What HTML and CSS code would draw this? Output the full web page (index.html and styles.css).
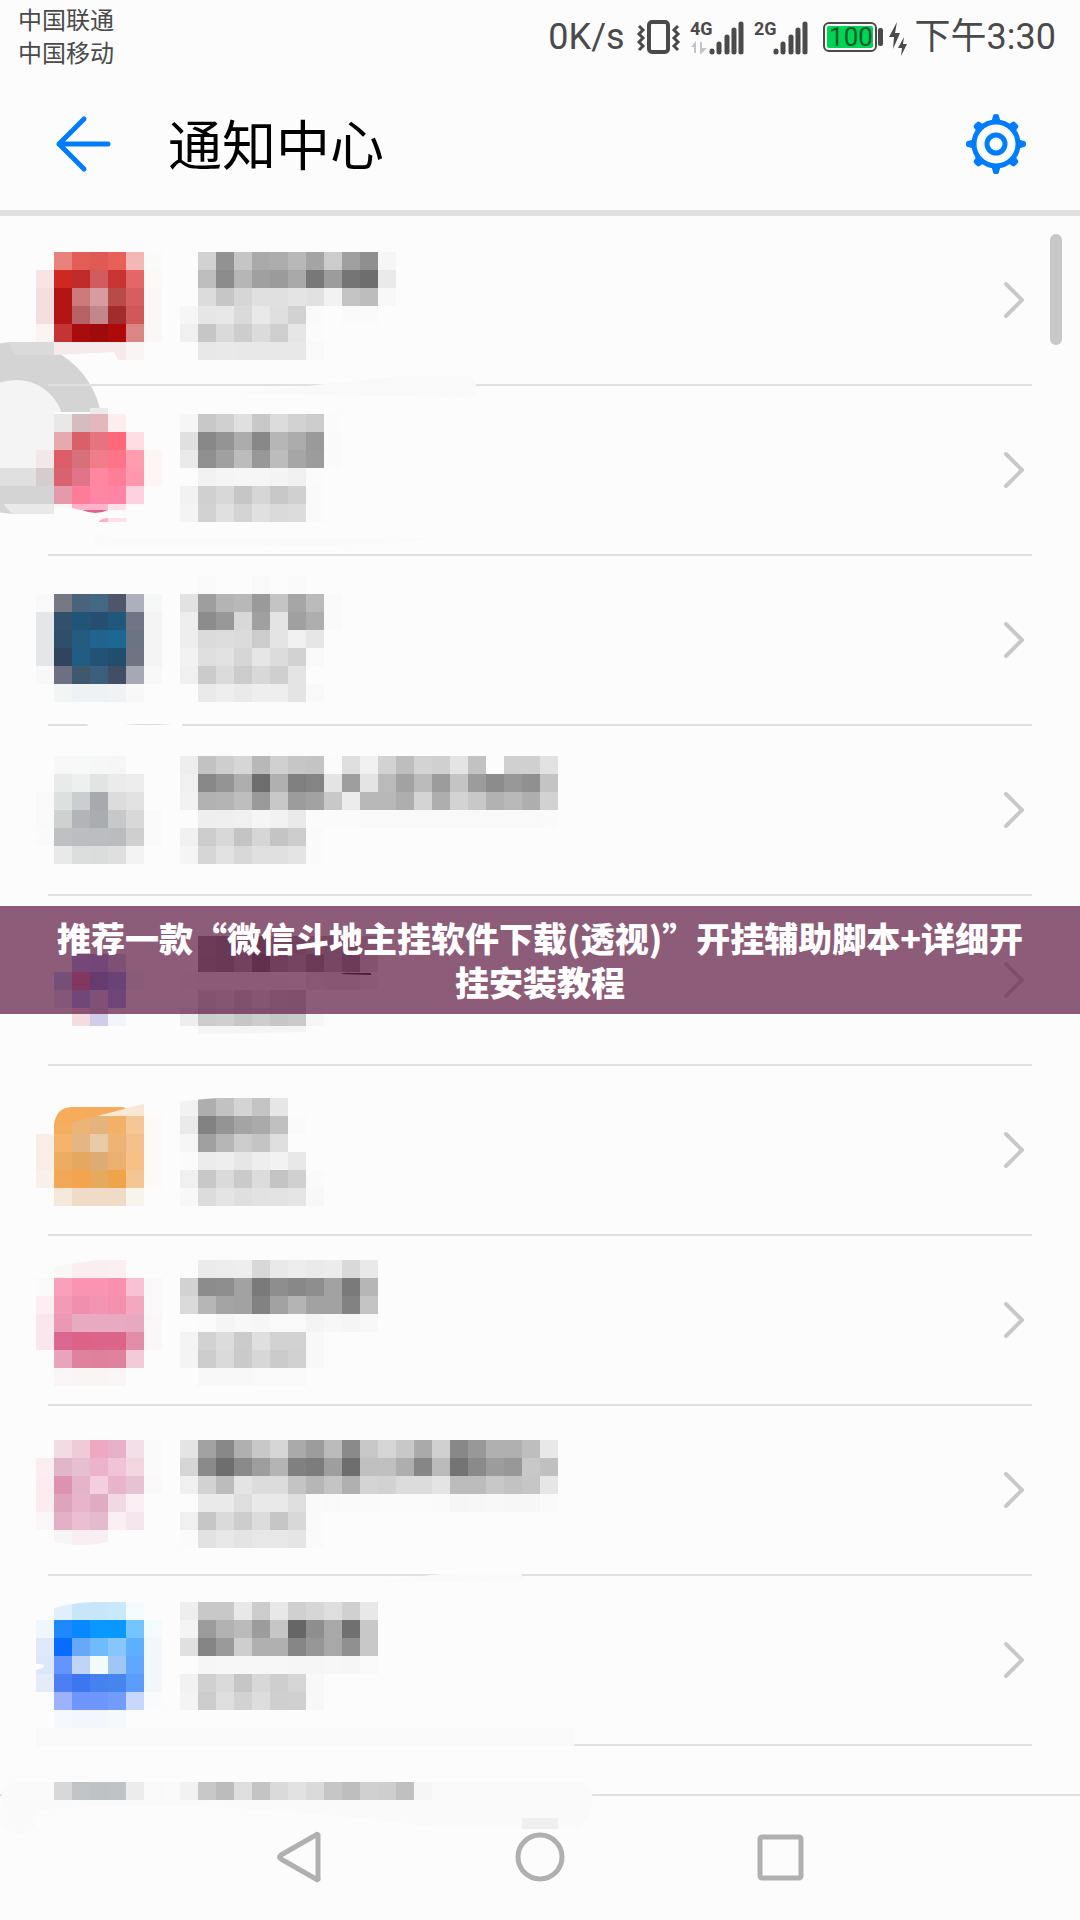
FILE: index.html
```
<!DOCTYPE html>
<html lang="zh-CN">
<head>
    <meta charset="UTF-8">
    <meta name="viewport" content="width=device-width, initial-scale=1.0">
    <title>通知中心</title>
    <link rel="stylesheet" href="styles.css">
</head>
<body>
    <div class="status-bar">
        <div class="carriers">
            <p>中国联通</p>
            <p>中国移动</p>
        </div>
        <div class="status-info">
            <span class="speed">0K/s</span>
            <svg class="vibrate" width="44" height="36" viewBox="0 0 44 36" fill="none" stroke="#4a4a4a">
                <rect x="12" y="3" width="19" height="30" rx="3" stroke-width="4"/>
                <path d="M2 7l4 4-4 4 4 4-4 4 4 4-4 4M41 7l-4 4 4 4-4 4 4 4-4 4 4 4" stroke-width="3"/>
            </svg>
            <svg class="signal" width="54" height="36" viewBox="0 0 54 36">
                <text x="-1" y="16">4G</text>
                <path d="M0 28l5-6v12H3v-6zM9 23h2v6h5l-6 6H9z" fill="#c4c4c4"/>
                <path d="M21 32v1M28 25v8M36 18v15M43 11v22M50 5v28" stroke="#4a4a4a" stroke-width="5" stroke-linecap="round"/>
            </svg>
            <svg class="signal" width="54" height="36" viewBox="0 0 54 36">
                <text x="-1" y="16">2G</text>
                <path d="M21 32v1M28 25v8M36 18v15M43 11v22M50 5v28" stroke="#4a4a4a" stroke-width="5" stroke-linecap="round"/>
            </svg>
            <svg class="battery" width="84" height="36" viewBox="0 0 84 36">
                <rect x="1" y="4" width="52" height="28" rx="5" fill="none" stroke="#4a4a4a" stroke-width="2"/>
                <rect x="4" y="7" width="46" height="22" rx="2" fill="#00d455"/>
                <rect x="55" y="9" width="5" height="18" rx="2" fill="#4a4a4a"/>
                <text x="28" y="27" text-anchor="middle">100</text>
                <path d="M74 3L66 18h5l-1 12 7-16h-5zM81 18l-6 11h4l-1 8 6-12h-4z" fill="#4a4a4a"/>
            </svg>
            <span class="clock">下午3:30</span>
        </div>
    </div>

    <header class="title-bar">
        <button class="icon-button" type="button" aria-label="返回">
            <svg width="60" height="60" viewBox="0 0 60 60" fill="none" stroke="#007dff" stroke-width="5" stroke-linecap="round" stroke-linejoin="round">
                <path d="M30 5L5 30l25 25M5 30h49"/>
            </svg>
        </button>
        <h1>通知中心</h1>
        <button class="icon-button" type="button" aria-label="设置">
            <svg width="60" height="60" viewBox="0 0 60 60" fill="none" stroke="#007dff">
                <circle cx="30" cy="30" r="22" stroke-width="5"/>
                <circle cx="30" cy="30" r="9" stroke-width="5"/>
                <g fill="#007dff" stroke="none">
                    <path d="M25 9l2-7q0-2 3-2t3 2l2 7z"/>
                    <path d="M25 9l2-7q0-2 3-2t3 2l2 7z" transform="rotate(90 30 30)"/>
                    <path d="M25 9l2-7q0-2 3-2t3 2l2 7z" transform="rotate(180 30 30)"/>
                    <path d="M25 9l2-7q0-2 3-2t3 2l2 7z" transform="rotate(270 30 30)"/>
                    <path d="M25 9l1-6q0-2 4-2t4 2l1 6z" transform="rotate(45 30 30)"/>
                    <path d="M25 9l1-6q0-2 4-2t4 2l1 6z" transform="rotate(135 30 30)"/>
                    <path d="M25 9l1-6q0-2 4-2t4 2l1 6z" transform="rotate(225 30 30)"/>
                    <path d="M25 9l1-6q0-2 4-2t4 2l1 6z" transform="rotate(315 30 30)"/>
                </g>
            </svg>
        </button>
    </header>

    <main>
        <button class="float-ball" type="button" aria-label="悬浮球">
            <svg width="172" height="172" viewBox="-70 342 172 172">
                <circle cx="16" cy="428" r="67" fill="#f4f4f4" stroke="#d4d4d4" stroke-width="38"/>
                <path d="M54 412h48v102H54z" fill="#fcfcfc"/>
                <path d="M0 468h54v18H0z" fill="#e0e0e0"/>
                <path d="M0 486h54v18H0z" fill="#d4d4d4"/>
                <path d="M4 504h50v10H14q-6-2-10-10z" fill="#e9e9e9"/>
            </svg>
        </button>
        <ul class="app-list" id="app-list"></ul>
        <div class="scrollbar"></div>
        <div class="banner">推荐一款“微信斗地主挂软件下载(透视)”开挂辅助脚本+详细开挂安装教程</div>
    </main>

    <nav class="nav-bar">
        <button type="button" aria-label="后退">
            <svg width="50" height="50" viewBox="0 0 50 50"><path d="M43 3v42a1 1 0 0 1-2 1L6 26q-3-2 0-4L41 2a1 1 0 0 1 2 1z"/></svg>
        </button>
        <button type="button" aria-label="主页">
            <svg width="50" height="50" viewBox="0 0 50 50"><circle cx="25" cy="24" r="22"/></svg>
        </button>
        <button type="button" aria-label="最近任务">
            <svg width="50" height="50" viewBox="0 0 50 50"><rect x="5" y="4" width="41" height="41" rx="2"/></svg>
        </button>
    </nav>

    <script src="script.js"></script>
</body>
</html>
```

FILE: styles.css
```
* {
    margin: 0;
    padding: 0;
    box-sizing: border-box;
}

body {
    display: flex;
    flex-direction: column;
    min-height: 100vh;
    font-family: Roboto, 'Noto Sans CJK SC', sans-serif;
    color: #4a4a4a;
    background-color: #fcfcfc;
    overflow-x: hidden;
}

button {
    border: none;
    background: none;
    cursor: pointer;
}

svg {
    display: block;
    overflow: visible;
}

/* 状态栏 */
.status-bar {
    display: flex;
    justify-content: space-between;
    height: 72px;
    padding: 4px 24px 0 18px;
}

.carriers {
    padding-top: 1px;
    font-size: 24px;
    line-height: 33px;
}

.status-info {
    display: flex;
    align-items: center;
    height: 66px;
    font-size: 36px;
    line-height: 48px;
}

.vibrate {
    margin-left: 12px;
}

.signal {
    margin-left: 10px;
}

.signal text {
    font-size: 18px;
    font-weight: bold;
    fill: #4a4a4a;
}

.battery {
    margin-left: 14px;
}

.battery text {
    font-size: 26px;
    fill: #17592f;
}

.clock {
    margin-left: 8px;
}

/* 标题栏 */
.title-bar {
    display: flex;
    align-items: center;
    height: 144px;
    padding: 6px 54px 0;
    border-bottom: 6px solid #e0e0e0;
}

.icon-button {
    width: 60px;
    height: 60px;
}

.title-bar h1 {
    flex: 1;
    padding: 8px 0 0 54px;
    font-size: 54px;
    font-weight: normal;
    line-height: 72px;
    color: #000;
}

/* 列表 */
main {
    position: relative;
    z-index: 1;
    flex: 1;
}

.float-ball {
    position: absolute;
    z-index: -1;
    top: 126px;
    left: -70px;
}

.app-list {
    padding: 0 48px;
    list-style: none;
}

.app-list a {
    display: flex;
    align-items: center;
    gap: 18px;
    padding-right: 7px;
    border-bottom: 2px solid #e0e0e0;
}

.app-list li:last-child a {
    border-bottom: none;
}

.chevron {
    margin-left: auto;
}

.scrollbar {
    position: absolute;
    top: 18px;
    right: 18px;
    width: 12px;
    height: 111px;
    border-radius: 6px;
    background-color: #c8c8c8;
}

.banner {
    position: absolute;
    top: 690px;
    left: 0;
    right: 0;
    padding: 10px 48px;
    font-family: 'Noto Sans CJK SC', sans-serif;
    font-size: 34px;
    font-weight: 900;
    line-height: 44px;
    text-align: center;
    color: #fff;
    background-color: rgba(99, 30, 71, 0.72);
}

/* 导航栏 */
.nav-bar {
    display: flex;
    justify-content: center;
    align-items: center;
    gap: 190px;
    height: 126px;
    border-top: 2px solid #e0e0e0;
}

.nav-bar svg {
    fill: none;
    stroke: #b0b0b0;
    stroke-width: 5;
}
```

FILE: script.js
```
// 每个色块 18px，"." 表示空白；两位数字为灰度
const CELL = 18;

const apps = [
    {
        top: 36,
        smudge: '<path d="M240 178Q340 166 400 160H470q6 4 6 10 0 11-10 11Z" fill="#f9f9f9"/>',
        icon: [
            '. e8827c e15d55 e05a54 e8605a f4b8b4 fafaf8',
            'f8e4e4 cf2820 c12a2a d05c60 c83432 e56666 fcf8f6',
            'f5dede b31414 cc7a7a d89c9e b84a48 d65e5e fbf7f6',
            'f5dede b31414 b66264 c4868a a02c2c d05858 fbf7f6',
            'faf4f2 c43434 a80c0c 9f0a0a af0a0a da8684 fbf7f6',
            '. . . . . faf4f4 .'
        ],
        iconExtra: '<path d="M9 126h45v13H16q-5-4-7-13z" fill="#dadada"/><path d="M54 126h72v18h-8l-4-8-60 3z" fill="#f6eaea"/>',
        text: [
            '. d2 92 c5 aa ad b8 a4 cc a0 8f f6',
            '. be 8c b6 a0 9b a8 78 9c 75 6e ea',
            '. dc c6 d6 e0 e0 e4 e1 f2 c4 bd f8',
            'f6 e6 e8 da e9 df d2 fa . fa fa',
            'f0 c6 da cd db cf e6 fb',
            '. e8 e9 e8 e8 e8 e8 f9'
        ]
    },
    {
        top: 28,
        smudge: '<path d="M94 150Q96 140 110 152H430Q400 162 100 162Q94 158 94 150Z" fill="#fafafa"/>',
        icon: [
            '. e8e8e8 d4bcbe e2b8bc fceeee . .',
            '. e6aaae d95f68 e5747e ff6878 ffdce2 .',
            'f2e8ea dc5c68 d8707a f07e8a ff7488 ff9cae fdf6f5',
            'd4cccd d96270 e2748a ff88a0 ff7e98 ff98ae fdf6f5',
            'd4d4d4 e29aaa fe7c98 ff86a4 ff84a6 ffd0e0 .'
        ],
        iconExtra: '<path d="M90 22h18v6H90z" fill="#ebebeb"/><path d="M54 118h18v4H54z" fill="#faf6f6"/><path d="M72 118h36v6H80l-8-2z" fill="#fdb4cb"/><path d="M108 118h18v6h-18z" fill="#fde0e8"/><path d="M82 124h26q-12 6-26 0z" fill="#e0608a"/><path d="M98 136q4-4 10-4v4z" fill="#ffb0c8"/><path d="M108 132h18v4h-18z" fill="#fde0e8"/>',
        text: [
            'f6 c8 d0 e0 c8 dc d2 cc fb',
            'e0 88 94 ac 88 b6 ac 9a fa',
            'ea 90 a0 bc 98 bc a6 9c fa',
            '. f2 f5 f6 f6 f4 f0 fb',
            'f2 d0 d8 c6 d6 c8 d0 fa',
            'f4 d2 e0 d4 e0 da dc fa'
        ]
    },
    {
        top: 20,
        smudge: '<path d="M84 160Q130 174 182 167V170H88z" fill="#fcfcfc"/>',
        icon: [
            '',
            'f9f9fa 767884 4a627a 426884 50566a acb0bc f6f8f8',
            'e4e6e8 30506c 225478 264e70 20587c 707484 f4f4f4',
            'e4e6e8 2e4e6a 245a80 20648e 1c6892 6c7484 f4f4f4',
            'e4e6e8 304460 205c84 225274 224e6e 707482 f4f4f4',
            'f8f8f9 6c7080 40586e 3a5e7c 424e64 a6a8b4 f8f8f8',
            '. f3f4f4 eff2f4 eff2f4 f0f2f4 f8f8f9 .'
        ],
        text: [
            '. f9 . . f9 . f9',
            'e2 9e b4 b8 9a c4 a6 ba fa',
            'ee 8c 98 d8 a0 e4 a0 ae fa',
            'ee db dd db cc e4 f0 e6',
            'f2 de e2 d6 e6 dc d2 f9',
            'f0 cb db cc d8 cf e4',
            '. ea ee ea ee ee e4 f9'
        ]
    },
    {
        top: 30,
        icon: [
            '. f8f8f8 f7f8f8 f7f7f7 f6f6f6 . .',
            '. e9eaea ecf0ef e1e4e3 ecebec ededed .',
            'f9f9f9 dce0de cccdcf a8a9ac dcdcdd e2e2e2 .',
            'f9f9f9 cfd1d1 b2b4b7 aaadb0 c6c8ca d8d8d8 fafafa',
            'fafafa bec0c2 bbbdc0 bbbdc0 babcbe cfcfcf fafafa',
            '. e9e9e9 dbdedd dadddb dedfde f3f3f3 .'
        ],
        text: [
            'ee c2 ce d6 b8 d0 c6 c4 fb de f1 d2 be d3 d0 e4 c2 . d0 d0 e2',
            'f0 88 94 ae 6e b0 80 84 e4 9e e4 ba a2 ba 9c c4 9c 8c 98 90 c4',
            'f2 b2 b4 be 9a c8 9c a2 c8 ec b8 b8 ae d4 ae d3 c8 b2 b9 ae d2',
            '. ee ef f0 f5 f2 ea fb fb fb f9 f9 f9 f9 f9 f9 f9 f9 f9 f9 fa',
            'f1 cc d8 c4 d6 c4 cc fa',
            'f5 d6 e2 d8 e0 e0 e4 fa'
        ]
    },
    {
        top: 40,
        icon: [
            '',
            '. . a0b0f8 a0acf4 c8d0e6 . .',
            '. a8c8fe d878a0 7088dc 7ca0f8 f4f4f8 .',
            '. e0e4f8 90b0f8 ccd0ec 90a8f8 . .',
            '. . f4dcdf d0cdea f2f5fb . .'
        ],
        text: [
            '. 84 7c 9a 74 b0 9c b4 ac a4 d0',
            'fa 80 7c 9a 5e 94 a4 80 ac 84 d8',
            'f6 f4 f4 f4 f4 f4 f8 e8 e4 e4 f0',
            '. d8 e0 d0 e0 d0 cc',
            'ee cc cf c6 cd c6 ca f6'
        ],
        textExtra: '<path d="M340 78q8-2 11-1h20v2z" fill="#181018"/><path d="M198 130h108v6l-108 2z" fill="#f5f5f5"/>'
    },
    {
        top: 32,
        icon: [
            '. . . . . . .',
            '. f4ae62 ecb476 e4b47c f2b068 f6c694 fcf9f6',
            'f8eee6 f5b46a e4b684 e8cca8 eeb476 f6c08a fcf9f6',
            'f8eee6 eeac62 e6a860 dcac74 eab070 f6c086 fcf9f6',
            'faf0ea f2a858 f4a44e e6aa5e eea448 f4c694 fcf9f6',
            '. f4eadc f0dcc6 f0dcc6 f0dcc6 f8f4ec .'
        ],
        iconExtra: '<path d="M96 50l30-8 18-4v12z" fill="#fae8d6"/><path d="M54 60V58Q56 41 72 41H122q6 1 2 2L90 52z" fill="#f6ac5a"/><path d="M54 40V59Q56 41 72 41V40z" fill="#fcfcfc"/>',
        text: [
            'f2 ae c2 d4 c4 e6',
            'ea 82 94 a4 aa c0 fa',
            'f6 a0 b6 cc c4 de',
            'fb ec ee e6 ee f2 e8',
            'f0 c8 da ca dc c4 d0 fa',
            'f8 dc e4 df e2 e3 e5 f8'
        ],
        textExtra: '<path d="M180 32h38q-20 1-38 4z" fill="#fcfcfc"/>'
    },
    {
        top: 24,
        icon: [
            '. fcf6f7 fbeef1 fbeef1 fbeff2 . .',
            'fafafa f8a0bc fa94b2 fa94b2 fa90b0 f8c2d4 fbf8fa',
            'fceef2 f29ab6 f090ae f294b2 f290ae f4a8c0 fbf8fa',
            'f8e8ee ea98b4 e8aac0 e8aac0 e8aac0 e8a8c0 fbf6f8',
            'f8e8ee da6890 dc6288 dc648a dc648a e28ea8 fbf6f8',
            '. e8a4bc de82a0 de829c de829e f2cad8 .',
            '. faf5f6 faf4f5 faf4f5 faf5f6'
        ],
        iconExtra: '<path d="M54 24h44q-22 2-44 7z" fill="#fcfcfc"/>',
        text: [
            '. eb ed ee d8 e9 ed ea ec d9 e9',
            'd2 8c 8e a2 7a 8e 88 8e a2 7a b6',
            'da b6 a4 a2 82 a2 b4 a2 a2 82 c4',
            '. fb f5 f8 f6 f9 f9 f4 f7 f5 f8',
            'f4 d2 dc cb df d2 d2 f8',
            'f4 cc da ca d7 cb d1 f8',
            '. f8 f8 f8 f9 f9 f9'
        ]
    },
    {
        top: 34,
        smudge: '<path d="M380 176Q430 168 460 167H520q4 3 4 8Z" fill="#fafafa"/>',
        icon: [
            '. f1dce4 efcbd8 f0a8c2 e6b0c8 f2dfe7 fafafa',
            'faeef1 e0b6c8 e6c0d0 ecb4cc f0c4d6 f4d6e1 fafafa',
            'fbecf1 dc92b0 e6b4c8 f4cedc e8b4cc e6c2d2 fbf8f9',
            'fbecf0 dea4bc e8b4cc e0acc2 f2d8e2 faf0f3 .',
            'fbf7f8 e4b0c6 ecbed2 e4bace faf0f3 f4e6ec .',
            '. f9f4f5 f9eef1 f9eef1 . . .'
        ],
        iconExtra: '<path d="M54 142V136q30 6 54 0v6z" fill="#fcfcfc"/>',
        text: [
            'e4 a2 88 b0 c8 d6 aa 9c ba 8a c8 d6 c8 aa d0 88 98 b0 b0 be e8',
            'd6 8a 6e 8a 9e b4 80 7c 9e 6e c0 c0 ae 86 ba 74 8a 9c 98 c8 c0',
            'f0 d2 bc e4 dc dc c4 b6 c4 b0 d4 d2 dc dc e4 bc bc c8 c2 c6 e6',
            '. ea ea de e9 e9 de fa f9 fa fa fb fb fb fa f6 f7 f8 f7 f7 fa',
            'f0 c6 da cd dc c6 d8 fa',
            'fb e2 e8 e4 e7 e7 e5 fa'
        ]
    },
    {
        top: 26,
        smudge: '<path d="M36 152H574q2 8 0 18H36z" fill="#f9f9f9"/>',
        icon: [
            '. e0f0fb c8e6fa c8e6fa c8e8fb f4fbfd .',
            'f0f6fd 2088fc 0888fe 0898ff 0898ff 74c4ff f4fbfd',
            'e0e9fa 086cfe 68a8f8 70bafe 88c6fe 5cb0fe f2f7fc',
            'dde7fa 6494fe c0d4f6 f4fbfd a0c6f6 60a8fe f2f7fc',
            'e4ebf9 4c7ef4 3c76f0 4682ee 4684ee 5c9cfa f2f7fc',
            '. 9cb2fc 6e96fc 6e96fc 729cfa c8d8fc fafbfd',
            '. f5f8fc f3f6fc f3f6fc f6f9fc'
        ],
        iconExtra: '<path d="M54 26h40q-24 1-40 6z" fill="#fcfcfc"/><path d="M36 88q8 0 8 2t-8 4z" fill="#fff"/>',
        text: [
            'ee c8 c8 e8 cc e8 d0 d6 de d0 e8',
            'f4 9c b2 ba 9c c6 66 8e a8 70 c8',
            'e0 84 9a ce b0 b0 86 96 a8 90 c8',
            '. f6 f7 f7 f7 f7 f6 f6 f7 f6 f9',
            'f2 d0 da c6 d8 ce d5 f8',
            'f4 cc de d2 dd cf d0 f8'
        ]
    },
    {
        top: 36,
        height: 48,
        smudge: '<path d="M2 48Q4 36 20 36H580q12 4 13 18-4 26-18 28H440Q200 50 36 64v12q-4 12-16 12T0 76z" fill="#fafafa"/>',
        icon: ['. d6d8da c2c3c5 bec2c5 bdc3c7 ececec f9f9f9'],
        text: ['f2 c8 bc de c4 da e2 da c6 be d0 ce c0 f6'],
        textExtra: '<path d="M522 72h36v11h-36z" fill="#efefef"/>'
    }
];

function drawCells(rows, left, top) {
    return rows.map((row, r) => row.split(' ').map((c, i) => {
        if (c === '.' || c === '') return '';
        const color = c.length === 2 ? c + c + c : c;
        return `<rect x="${left + i * CELL}" y="${top + r * CELL}" width="${CELL}" height="${CELL}" fill="#${color}"/>`;
    }).join('')).join('');
}

document.getElementById('app-list').innerHTML = apps.map(app => {
    const h = app.height || 168;
    const chevron = app.height ? '' : `
            <svg class="chevron" width="22" height="38" viewBox="0 0 22 38" fill="none" stroke="#c9c9c9" stroke-width="4" stroke-linecap="round" stroke-linejoin="round">
                <path d="M3 3l16 16L3 35"/>
            </svg>`;
    return `
    <li>
        <a href="#" aria-label="应用通知">
            <svg width="114" height="${h}" viewBox="48 0 114 ${h}">
                ${app.smudge || ''}${drawCells(app.icon, 36, app.top)}${app.iconExtra || ''}
            </svg>
            <svg width="396" height="${h}" viewBox="180 0 396 ${h}">
                ${drawCells(app.text, 180, app.top)}${app.textExtra || ''}
            </svg>${chevron}
        </a>
    </li>`;
}).join('');
```
